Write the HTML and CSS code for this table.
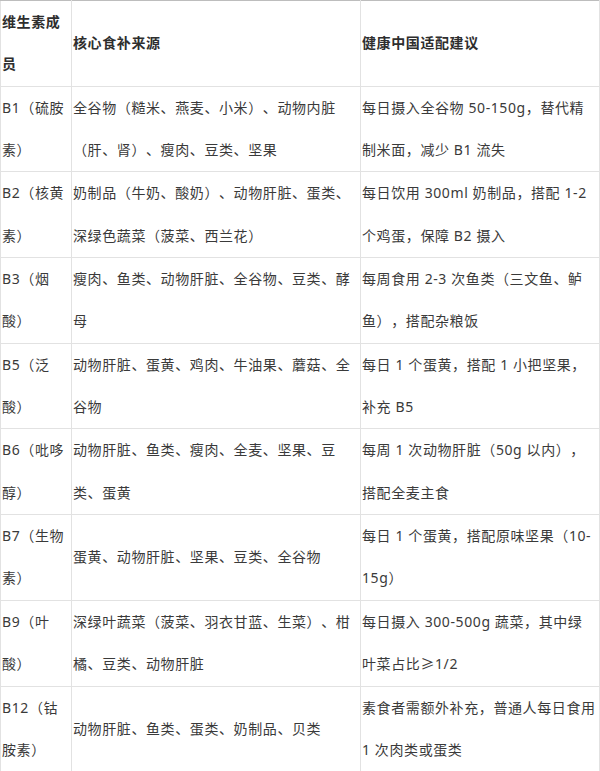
FILE: index.html
```html
<!DOCTYPE html>
<html lang="zh-CN">
<head>
<meta charset="utf-8">
<title>维生素B族</title>
<link rel="stylesheet" href="styles.css">
</head>
<body>
<table class="vt">
  <colgroup>
    <col class="c1">
    <col class="c2">
    <col class="c3">
  </colgroup>
  <thead>
    <tr>
      <th>维生素成员</th>
      <th>核心食补来源</th>
      <th>健康中国适配建议</th>
    </tr>
  </thead>
  <tbody>
    <tr>
      <td>B1（硫胺素）</td>
      <td>全谷物（糙米、燕麦、小米）、动物内脏（肝、肾）、瘦肉、豆类、坚果</td>
      <td>每日摄入全谷物 50-150g，替代精制米面，减少 B1 流失</td>
    </tr>
    <tr>
      <td>B2（核黄素）</td>
      <td>奶制品（牛奶、酸奶）、动物肝脏、蛋类、深绿色蔬菜（菠菜、西兰花）</td>
      <td>每日饮用 300ml 奶制品，搭配 1-2 个鸡蛋，保障 B2 摄入</td>
    </tr>
    <tr>
      <td>B3（烟酸）</td>
      <td>瘦肉、鱼类、动物肝脏、全谷物、豆类、酵母</td>
      <td>每周食用 2-3 次鱼类（三文鱼、鲈鱼），搭配杂粮饭</td>
    </tr>
    <tr>
      <td>B5（泛酸）</td>
      <td>动物肝脏、蛋黄、鸡肉、牛油果、蘑菇、全谷物</td>
      <td>每日 1 个蛋黄，搭配 1 小把坚果，补充 B5</td>
    </tr>
    <tr>
      <td>B6（吡哆醇）</td>
      <td>动物肝脏、鱼类、瘦肉、全麦、坚果、豆类、蛋黄</td>
      <td>每周 1 次动物肝脏（50g 以内），搭配全麦主食</td>
    </tr>
    <tr>
      <td>B7（生物素）</td>
      <td>蛋黄、动物肝脏、坚果、豆类、全谷物</td>
      <td>每日 1 个蛋黄，搭配原味坚果（10-15g）</td>
    </tr>
    <tr>
      <td>B9（叶酸）</td>
      <td>深绿叶蔬菜（菠菜、羽衣甘蓝、生菜）、柑橘、豆类、动物肝脏</td>
      <td>每日摄入 300-500g 蔬菜，其中绿叶菜占比≥1/2</td>
    </tr>
    <tr>
      <td>B12（钴胺素）</td>
      <td>动物肝脏、鱼类、蛋类、奶制品、贝类</td>
      <td>素食者需额外补充，普通人每日食用 1 次肉类或蛋类</td>
    </tr>
  </tbody>
</table>
</body>
</html>
```

FILE: styles.css
```css
html, body {
  margin: 0;
  padding: 0;
  background: #ffffff;
}

body {
  font-family: "Noto Sans", "Noto Sans CJK SC", sans-serif;
  font-size: 14px;
  color: #3a3a3a;
  text-spacing-trim: space-all;
  font-feature-settings: "halt" 0, "chws" 0;
}

.vt {
  width: 599px;
  border-collapse: collapse;
  table-layout: fixed;
  border-top: 1px solid #bdbdbd;
}

.vt .c1 { width: 71px; }
.vt .c2 { width: 289px; }
.vt .c3 { width: 239px; }

.vt th,
.vt td {
  border: 1px solid #e2e2e2;
  padding: 0 2px 0 1px;
  line-height: 42.35px;
  letter-spacing: 0.6px;
  text-align: left;
  vertical-align: middle;
  word-break: normal;
}

.vt thead th {
  border-top: 1px solid #bdbdbd;
  font-weight: 700;
  color: #2e2e2e;
}
```
